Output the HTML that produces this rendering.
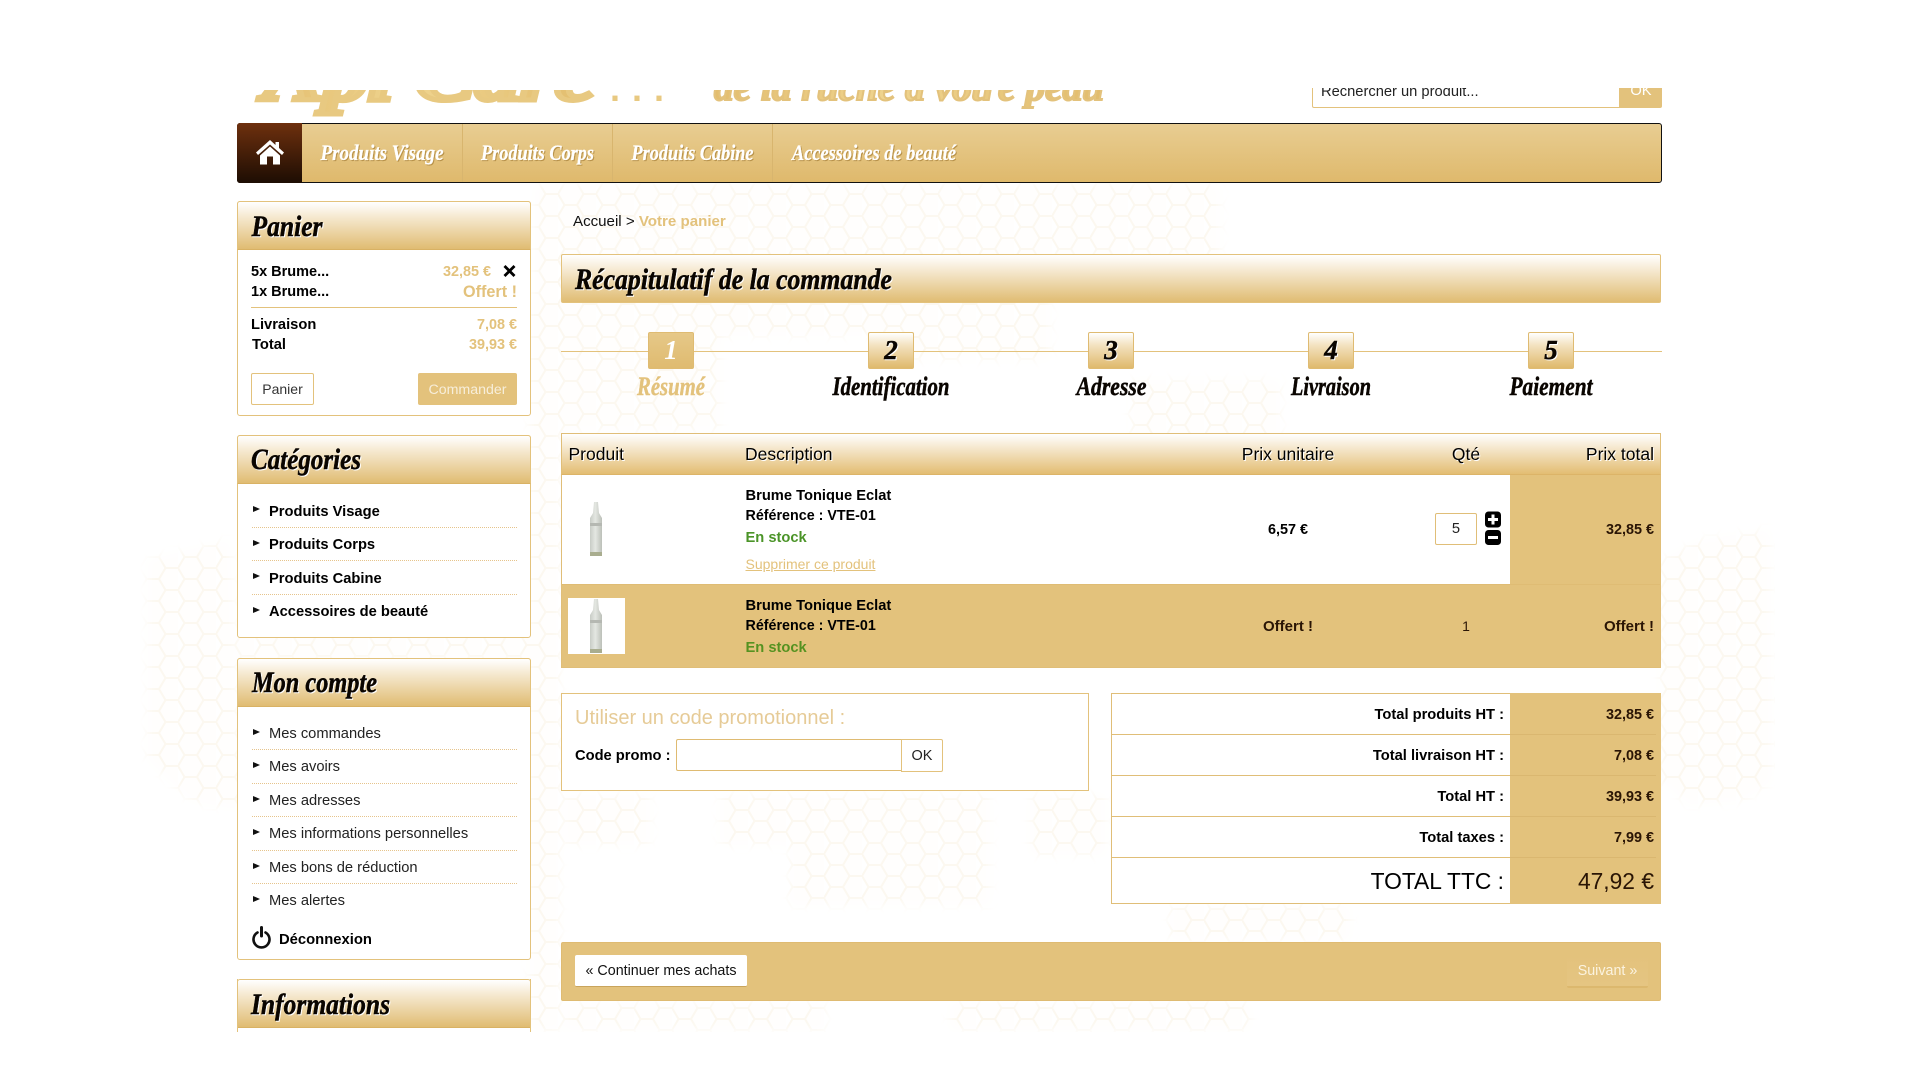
<!DOCTYPE html>
<html lang="fr"><head><meta charset="utf-8"><title>Votre panier</title>
<style>
html,body{margin:0;padding:0;background:#fff;width:1916px;height:1080px;overflow:hidden}
body{font-family:"Liberation Sans",Arial,sans-serif;font-size:14.7px;color:#000;position:relative}
.a{position:absolute;box-sizing:border-box}
.t{position:absolute;white-space:nowrap;line-height:20px;height:20px;margin-top:1px}
.b{font-weight:bold}
.r{text-align:right}
.c{text-align:center}
.gold{color:#e3c27c}
.dk{color:#2a1505}
.grn{color:#4b9428}
.v{font-size:14.400px}
.panel{position:absolute;box-sizing:border-box;left:237px;width:294px;background:#fff;border:1px solid #e3c27c;border-radius:3px}
.ph{position:absolute;left:-1px;right:-1px;top:-1px;height:49px;background:linear-gradient(#fff 0%,#f6ead2 30%,#e0bc72 100%);border:1px solid #e3c27c;border-bottom:1px solid #d9b264;border-radius:3px 3px 0 0;box-sizing:border-box}
.dot{position:absolute;left:252px;width:265px;height:0;border-top:1px dotted #e6c48c}
.arr{position:absolute;left:253px;width:0;height:0;border-left:7px solid #111;border-top:3.5px solid transparent;border-bottom:3.5px solid transparent}
.cell{position:absolute;background:#e3c27c}
.ln{position:absolute;background:#e0be78;height:1px}
.stp{position:absolute;top:332px;width:46px;height:37px;border:1px solid #dfbb72;border-radius:2px;background:linear-gradient(#fff 0%,#f3e2c0 35%,#dfb96c 100%);box-sizing:border-box}
</style></head><body>

<svg class="a" style="left:0;top:0" width="1916" height="1080">
<defs>
<pattern id="h" x="140" y="183" width="38" height="44" patternUnits="userSpaceOnUse">
<g fill="#fffefd" stroke="#fcf8f0" stroke-width="2">
<path d="M0 11 6.5 0H19.500L26 11 19.500 22H6.500Z"/>
<path d="M0 33 6.500 22H19.500L26 33 19.500 44H6.500Z"/>
<path d="M19 0 25.500-11H38.500L45 0 38.500 11H25.500Z"/>
<path d="M19 22 25.500 11H38.500L45 22 38.500 33H25.500Z"/>
<path d="M19 44 25.500 33H38.500L45 44 38.500 55H25.500Z"/>
</g></pattern>
<filter id="bl" x="-10%" y="-10%" width="120%" height="120%"><feGaussianBlur stdDeviation="5"/></filter>
<mask id="m" maskUnits="userSpaceOnUse" x="0" y="0" width="1916" height="1080">
<g fill="#fff" filter="url(#bl)">
<path d="M148 560 230 540 240 810 190 800 148 760Z"/>
<path d="M1660 560 1700 540 1770 530 1772 780 1745 800 1690 805 1660 780Z"/>
<rect x="535" y="186" width="500" height="150"/>
<rect x="900" y="186" width="320" height="70"/>
<rect x="530" y="300" width="190" height="130"/>
<rect x="880" y="300" width="170" height="60"/>
<rect x="1130" y="380" width="150" height="60"/>
<rect x="530" y="430" width="30" height="600"/>
<rect x="565" y="795" width="85" height="50"/>
<rect x="720" y="795" width="270" height="50"/>
<rect x="790" y="840" width="200" height="65"/>
<rect x="1030" y="795" width="75" height="60"/>
<rect x="1170" y="906" width="180" height="34"/>
<rect x="565" y="1003" width="260" height="27"/>
<rect x="950" y="1003" width="300" height="27"/>
<rect x="237" y="636" width="294" height="22"/>
</g></mask>
</defs>
<rect x="140" y="183" width="1635" height="849" fill="url(#h)" mask="url(#m)"/>
</svg>

<!-- logo, clipped -->
<svg class="a" style="left:0;top:90px" width="1300" height="30" viewBox="0 90 1300 30">
<defs><linearGradient id="lg" x1="0" y1="0" x2="1" y2="0"><stop offset="0" stop-color="#e3bd6e"/><stop offset=".45" stop-color="#efd48f"/><stop offset="1" stop-color="#e2bc6c"/></linearGradient></defs>
<text x="263" y="100" font-family="Liberation Serif" font-weight="bold" font-style="italic" font-size="66" textLength="332" lengthAdjust="spacingAndGlyphs" fill="url(#lg)" stroke="#e8c981" stroke-width="5">Api Care</text>
<text x="610" y="101" font-family="Liberation Sans" font-weight="bold" font-size="36" textLength="54" fill="#e8c981">. . .</text>
<text x="714" y="100" font-family="Liberation Serif" font-weight="bold" font-style="italic" font-size="38" textLength="390" lengthAdjust="spacingAndGlyphs" fill="url(#lg)" stroke="#e3c27c" stroke-width="2">de la ruche à votre peau</text>
</svg>

<!-- search -->
<div class="a" style="left:1312px;top:88px;width:308px;height:20px;background:#fff;border:1px solid #e3c27c;border-top:0;overflow:hidden;border-radius:0 0 0 2px"><div class="t" style="left:8px;top:-7px;color:#222">Rechercher un produit...</div></div>
<div class="a" style="left:1620px;top:88px;width:42px;height:20px;background:#e3c27c;overflow:hidden;border-radius:0 0 2px 0"><div class="t c" style="left:0;width:42px;top:-8px;color:#fff">OK</div></div>

<!-- nav -->
<div class="a" style="left:237px;top:123px;width:1425px;height:60px;border:1px solid #111;border-radius:3px;background:linear-gradient(#e8cd92,#dfb96c)"></div>
<div class="a" style="left:237px;top:123px;width:65px;height:60px;background:linear-gradient(#6e300e,#1d0d03);border-radius:3px 0 0 3px"></div>
<svg class="a" style="left:256px;top:140px" width="28" height="25" viewBox="0 0 28 25"><path d="M14 0 0 12.500 2 15 14 4.500 26 15 28 12.500 23 8V2H19.500V5Z" fill="#fff"/><path d="M4 15.500 14 6.500 24 15.500V24.500H17V16.500H11V24.500H4Z" fill="#fff"/></svg>
<div class="a" style="left:462px;top:124px;width:1px;height:58px;background:#d8b56e"></div>
<div class="a" style="left:612px;top:124px;width:1px;height:58px;background:#d8b56e"></div>
<div class="a" style="left:772px;top:124px;width:1px;height:58px;background:#d8b56e"></div>

<!-- panier -->
<div class="panel" style="top:201px;height:215px"><div class="ph"></div></div>
<div class="t b" style="left:251px;top:261px;font-size:14.500px">5x Brume...</div>
<div class="t b" style="left:251px;top:281px;font-size:14.500px">1x Brume...</div>
<div class="t b" style="left:251px;top:314px">Livraison</div>
<div class="t b" style="left:252px;top:334px">Total</div>
<div class="t r gold b v" style="left:390px;width:101px;top:261px">32,85 €</div>
<div class="t r gold b" style="left:416px;width:101px;top:281px;font-size:16.200px">Offert !</div>
<div class="t r gold b v" style="left:416px;width:101px;top:314px">7,08 €</div>
<div class="t r gold b v" style="left:416px;width:101px;top:334px">39,93 €</div>
<svg class="a" style="left:503px;top:265px" width="13" height="12" viewBox="0 0 13 12"><path d="M1.500 1 11.500 11M11.500 1 1.500 11" stroke="#000" stroke-width="2.800" fill="none"/></svg>
<div class="a" style="left:251px;top:307px;width:266px;height:1px;background:#e3c27c"></div>
<div class="a c" style="left:251px;top:373px;width:63px;height:32px;border:1px solid #e3c27c;border-radius:2px;line-height:31px;color:#333;background:#fff;font-size:14px">Panier</div>
<div class="a c" style="left:418px;top:373px;width:99px;height:32px;background:#e3c27c;border-radius:2px;line-height:34px;color:#f7eeda;font-size:14.200px">Commander</div>

<!-- catégories -->
<div class="panel" style="top:435px;height:203px"><div class="ph"></div></div>
<div class="arr" style="top:506px"></div><div class="t b" style="left:269px;top:501px">Produits Visage</div><div class="dot" style="top:527px"></div>
<div class="arr" style="top:540px"></div><div class="t b" style="left:269px;top:534px">Produits Corps</div><div class="dot" style="top:560px"></div>
<div class="arr" style="top:573px"></div><div class="t b" style="left:269px;top:568px">Produits Cabine</div><div class="dot" style="top:594px"></div>
<div class="arr" style="top:607px"></div><div class="t b" style="left:269px;top:601px">Accessoires de beauté</div>

<!-- mon compte -->
<div class="panel" style="top:658px;height:302px"><div class="ph"></div></div>
<div class="arr" style="top:729px"></div><div class="t" style="left:269px;top:723px;color:#222">Mes commandes</div><div class="dot" style="top:749px"></div>
<div class="arr" style="top:762px"></div><div class="t" style="left:269px;top:756px;color:#222">Mes avoirs</div><div class="dot" style="top:783px"></div>
<div class="arr" style="top:796px"></div><div class="t" style="left:269px;top:790px;color:#222">Mes adresses</div><div class="dot" style="top:816px"></div>
<div class="arr" style="top:829px"></div><div class="t" style="left:269px;top:823px;color:#222">Mes informations personnelles</div><div class="dot" style="top:850px"></div>
<div class="arr" style="top:863px"></div><div class="t" style="left:269px;top:857px;color:#222">Mes bons de réduction</div><div class="dot" style="top:883px"></div>
<div class="arr" style="top:896px"></div><div class="t" style="left:269px;top:890px;color:#222">Mes alertes</div>
<svg class="a" style="left:251px;top:926px" width="21" height="23" viewBox="0 0 21 23"><path d="M6.500 6.500A8 8 0 1 0 14.500 6.500" stroke="#111" stroke-width="2.600" fill="none" stroke-linecap="round"/><path d="M10.500 1.500V10" stroke="#111" stroke-width="3" fill="none" stroke-linecap="round"/></svg>
<div class="t b" style="left:279px;top:929px;font-size:14.800px">Déconnexion</div>

<!-- informations -->
<div class="a" style="left:237px;top:979px;width:294px;height:53px;overflow:hidden;border-left:1px solid #e3c27c;border-right:1px solid #e3c27c;background:#fff"><div class="ph" style="top:0"></div></div>

<!-- breadcrumb & title -->
<div class="t" style="left:573px;top:211px;color:#111;font-size:15.100px">Accueil &gt; <span class="gold b">Votre panier</span></div>
<div class="a" style="left:561px;top:254px;width:1100px;height:49px;border:1px solid #e3c27c;border-radius:2px;background:linear-gradient(#fff 0%,#f8eedb 25%,#e0bc72 100%)"></div>

<!-- steps -->
<div class="a" style="left:561px;top:351px;width:1101px;height:1px;background:#e3c27c"></div>
<div class="stp" style="left:648px;background:linear-gradient(#e6c888,#dfbb70)"></div>
<div class="stp" style="left:868px"></div>
<div class="stp" style="left:1088px"></div>
<div class="stp" style="left:1308px"></div>
<div class="stp" style="left:1528px"></div>

<!-- table -->
<div class="a" style="left:561px;top:433px;width:1100px;height:235px;border:1px solid #e0be78;background:#fff"></div>
<div class="a" style="left:561px;top:433px;width:1100px;height:42px;border:1px solid #e0be78;border-bottom:1px solid #dcb468;background:linear-gradient(#fff 0%,#f8eedb 25%,#e3bd72 100%)"></div>
<div class="t" style="left:568.500px;top:443px;font-size:17.500px;text-shadow:1px 1px 0 #fff">Produit</div>
<div class="t" style="left:745px;top:443px;font-size:17.500px;text-shadow:1px 1px 0 #fff">Description</div>
<div class="t c" style="left:1188px;width:200px;top:443px;font-size:17.500px;text-shadow:1px 1px 0 #fff">Prix unitaire</div>
<div class="t c" style="left:1416px;width:100px;top:443px;font-size:17.500px;text-shadow:1px 1px 0 #fff">Qté</div>
<div class="t r" style="left:1454px;width:200px;top:443px;font-size:17.500px;text-shadow:1px 1px 0 #fff">Prix total</div>

<div class="cell" style="left:1510px;top:475px;width:150px;height:109px"></div>
<div class="cell" style="left:562px;top:585px;width:1098px;height:82px"></div>
<div class="ln" style="left:562px;top:584px;width:1098px;background:#dfbc74"></div>

<svg class="a" style="left:586px;top:501px" width="20" height="56" viewBox="0 0 20 56"><defs><linearGradient id="bt" x1="0" x2="1" y1="0" y2="0"><stop offset="0" stop-color="#c8ccc6"/><stop offset=".45" stop-color="#e4e7e2"/><stop offset="1" stop-color="#bcc0b9"/></linearGradient></defs><path d="M8 1H12L13 12 16 17V54Q10 56 4 54V17L7 12Z" fill="url(#bt)"/><rect x="4" y="22" width="12" height="3" fill="#b5b8b2"/><rect x="4" y="51" width="12" height="4" fill="#a9ad8f"/></svg>
<div class="a" style="left:568px;top:598px;width:57px;height:56px;background:#fff"></div>
<svg class="a" style="left:586px;top:598px" width="20" height="56" viewBox="0 0 20 56"><path d="M8 1H12L13 12 16 17V54Q10 56 4 54V17L7 12Z" fill="url(#bt)"/><rect x="4" y="22" width="12" height="3" fill="#b5b8b2"/><rect x="4" y="51" width="12" height="4" fill="#a9ad8f"/></svg>

<div class="t b" style="left:745.500px;top:485px">Brume Tonique Eclat</div>
<div class="t b" style="left:745.500px;top:505px;font-size:14.300px">Référence : VTE-01</div>
<div class="t b grn" style="left:745.500px;top:527px">En stock</div>
<div class="t gold" style="left:745.500px;top:553px;font-size:14px;text-decoration:underline">Supprimer ce produit</div>
<div class="t b c v" style="left:1188px;width:200px;top:519px">6,57 €</div>
<div class="a c" style="left:1435px;top:513px;width:42px;height:32px;border:1px solid #e0be78;border-radius:2px;background:#fff;line-height:31px;font-size:14.700px;color:#222">5</div>
<svg class="a" style="left:1485px;top:511px" width="16" height="35" viewBox="0 0 16 35"><rect width="16" height="16" y=".5" rx="3.500" fill="#000"/><path d="M8 3.500V13.500M3 8.500H13" stroke="#fff" stroke-width="3"/><rect width="16" height="15" y="19" rx="3.500" fill="#000"/><path d="M3 26.500H13" stroke="#fff" stroke-width="3"/></svg>
<div class="t b r dk v" style="left:1454px;width:200px;top:519px">32,85 €</div>

<div class="t b" style="left:745.500px;top:595px">Brume Tonique Eclat</div>
<div class="t b" style="left:745.500px;top:615px;font-size:14.300px">Référence : VTE-01</div>
<div class="t b" style="left:745.500px;top:637px;color:#559220">En stock</div>
<div class="t b c dk" style="left:1188px;width:200px;top:616px;font-size:15px">Offert !</div>
<div class="t c dk" style="left:1416px;width:100px;top:615px;font-size:14px">1</div>
<div class="t b r dk" style="left:1454px;width:200px;top:616px;font-size:15px">Offert !</div>

<!-- promo -->
<div class="a" style="left:561px;top:693px;width:528px;height:98px;border:1px solid #e3c27c;background:#fff"></div>
<div class="t" style="left:575px;top:707px;font-size:20px;color:#e6cb97">Utiliser un code promotionnel :</div>
<div class="t b" style="left:575px;top:745px">Code promo :</div>
<div class="a" style="left:676px;top:739px;width:226px;height:32px;border:1px solid #dfbb72;border-right:0;border-radius:2px 0 0 2px;background:#fff"></div>
<div class="a c" style="left:901px;top:739px;width:42px;height:33px;border:1px solid #e3c27c;border-radius:0 2px 2px 0;background:#fff;line-height:32px;font-size:14.500px;color:#222">OK</div>

<!-- totals -->
<div class="a" style="left:1111px;top:693px;width:550px;height:211px;border:1px solid #e0be78;background:#fff"></div>
<div class="cell" style="left:1510px;top:693px;width:151px;height:211px"></div>
<div class="ln" style="left:1111px;top:734px;width:400px"></div>
<div class="ln" style="left:1111px;top:775px;width:400px"></div>
<div class="ln" style="left:1111px;top:816px;width:400px"></div>
<div class="ln" style="left:1111px;top:857px;width:400px"></div>
<div class="ln" style="left:1510px;top:734px;width:146px;background:#dab770"></div>
<div class="ln" style="left:1510px;top:775px;width:146px;background:#dab770"></div>
<div class="ln" style="left:1510px;top:816px;width:146px;background:#dab770"></div>
<div class="ln" style="left:1510px;top:857px;width:146px;background:#dab770"></div>
<div class="t b r" style="left:1204px;width:300px;top:704px">Total produits HT :</div>
<div class="t b r" style="left:1204px;width:300px;top:745px">Total livraison HT :</div>
<div class="t b r" style="left:1204px;width:300px;top:786px">Total HT :</div>
<div class="t b r" style="left:1204px;width:300px;top:827px">Total taxes :</div>
<div class="t r" style="left:1204px;width:300px;top:870px;font-size:22.800px">TOTAL TTC :</div>
<div class="t b r dk v" style="left:1454px;width:200px;top:704px">32,85 €</div>
<div class="t b r dk v" style="left:1454px;width:200px;top:745px">7,08 €</div>
<div class="t b r dk v" style="left:1454px;width:200px;top:786px">39,93 €</div>
<div class="t b r dk v" style="left:1454px;width:200px;top:827px">7,99 €</div>
<div class="t r dk" style="left:1454px;width:200px;top:870px;font-size:22.800px">47,92 €</div>

<!-- footer bar -->
<div class="a" style="left:561px;top:942px;width:1100px;height:59px;background:#e3c27c;border:1px solid #dfbb72;border-radius:2px"></div>
<div class="a c" style="left:575px;top:955px;width:172px;height:32px;background:#fff;border-radius:2px;border-bottom:1px solid #c8a45c;line-height:32px;color:#111;font-size:14.300px">« Continuer mes achats</div>
<div class="a c" style="left:1567px;top:955px;width:81px;height:33px;background:linear-gradient(#e3c27c,#e5c582);border-bottom:2px solid #dcb86e;border-radius:2px;line-height:32px;color:#fbf3e0;font-size:14.300px">Suivant »</div>

<!-- script headings -->
<svg class="a" style="left:0;top:0;pointer-events:none" width="1916" height="1080" font-family="Liberation Serif" font-weight="bold" font-style="italic">
<g fill="#fff" stroke="#fff" stroke-width=".3" font-size="22" style="filter:drop-shadow(1px 1px 0 #b8924a)">
<text x="320.500" y="160" textLength="123" lengthAdjust="spacingAndGlyphs">Produits Visage</text>
<text x="481" y="160" textLength="113" lengthAdjust="spacingAndGlyphs">Produits Corps</text>
<text x="631.500" y="160" textLength="122" lengthAdjust="spacingAndGlyphs">Produits Cabine</text>
<text x="792" y="160" textLength="164" lengthAdjust="spacingAndGlyphs">Accessoires de beauté</text>
</g>
<g fill="#0a0500" stroke="#0a0500" stroke-width=".5" style="filter:drop-shadow(1px 1px 0 #fff)">
<text x="251.500" y="236" font-size="30" textLength="71" lengthAdjust="spacingAndGlyphs">Panier</text>
<text x="251" y="469" font-size="30" textLength="110" lengthAdjust="spacingAndGlyphs">Catégories</text>
<text x="252" y="692" font-size="30" textLength="125" lengthAdjust="spacingAndGlyphs">Mon compte</text>
<text x="251" y="1014" font-size="30" textLength="139" lengthAdjust="spacingAndGlyphs">Informations</text>
<text x="575" y="289" font-size="30" textLength="317" lengthAdjust="spacingAndGlyphs">Récapitulatif de la commande</text>
<text x="832.500" y="395" font-size="26" textLength="117" lengthAdjust="spacingAndGlyphs">Identification</text>
<text x="1076.500" y="395" font-size="26" textLength="70" lengthAdjust="spacingAndGlyphs">Adresse</text>
<text x="1291" y="395" font-size="26" textLength="80" lengthAdjust="spacingAndGlyphs">Livraison</text>
<text x="1509.500" y="395" font-size="26" textLength="83" lengthAdjust="spacingAndGlyphs">Paiement</text>
<g font-size="27" text-anchor="middle">
<text x="891" y="359">2</text><text x="1111" y="359">3</text><text x="1331" y="359">4</text><text x="1551" y="359">5</text>
</g>
</g>
<text x="671" y="359" font-size="27" text-anchor="middle" fill="#fff">1</text>
<text x="637" y="395" font-size="26" textLength="68" lengthAdjust="spacingAndGlyphs" fill="#e3c27c" stroke="#e3c27c" stroke-width=".4">Résumé</text>
</svg>
</body></html>
